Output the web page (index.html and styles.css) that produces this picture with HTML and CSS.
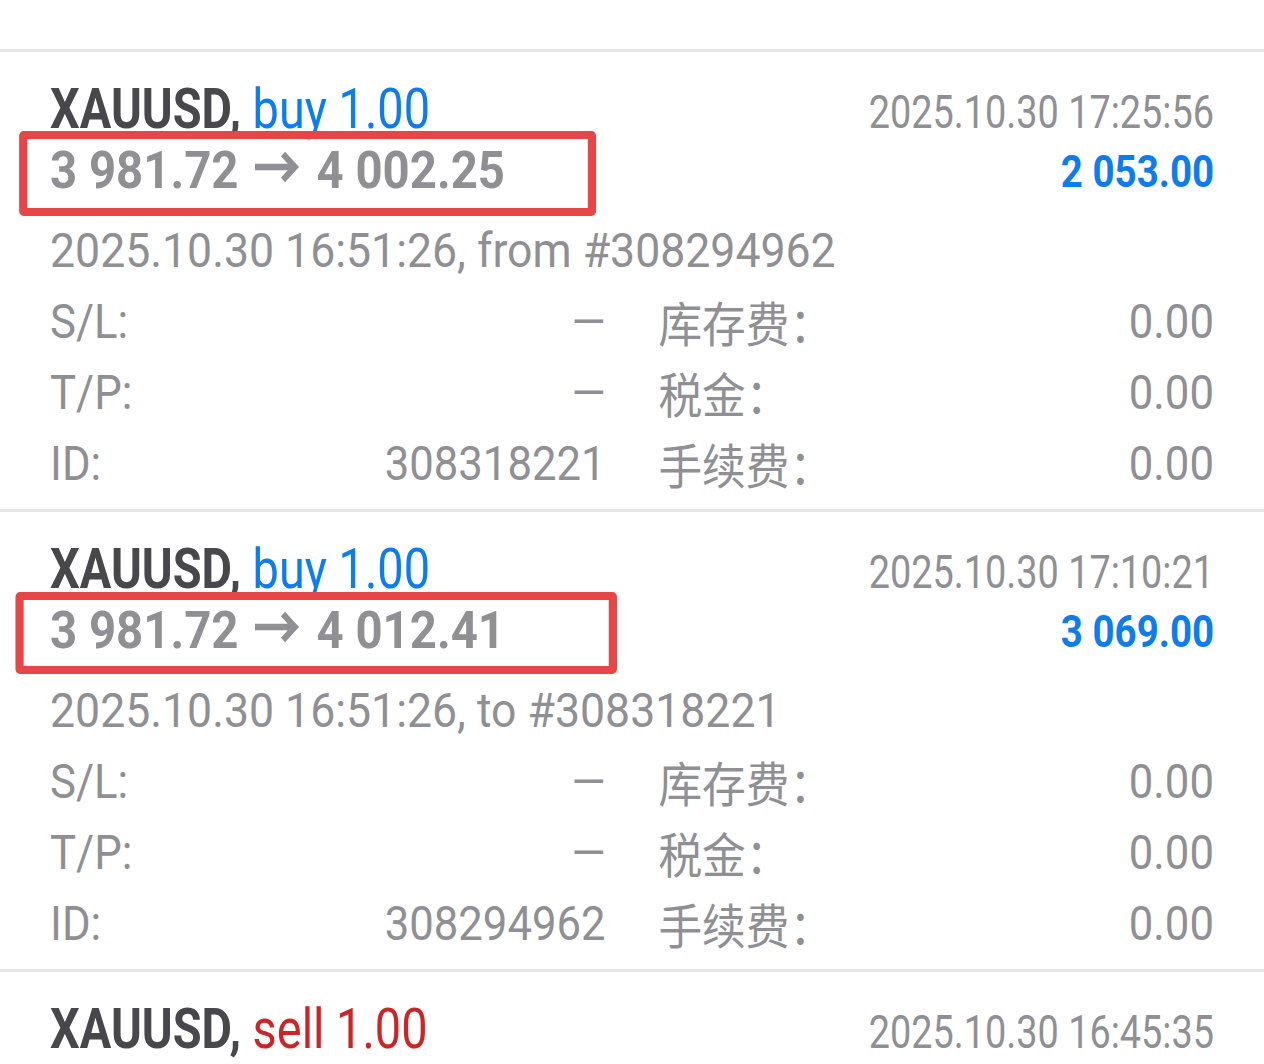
FILE: index.html
```html
<!DOCTYPE html>
<html lang="zh-CN">
<head>
  <meta charset="UTF-8">
  <meta name="viewport" content="width=device-width, initial-scale=1.0">
  <title>历史 - 成交</title>
  <link rel="stylesheet" href="styles.css">
</head>
<body>
  <div class="screen">
    <div class="top-gap"></div>

    <div class="deal">
      <div class="head">
        <div class="head-left">
          <div class="title"><span class="cond"><b class="sym">XAUUSD,</b> <span class="buy">buy 1.00</span></span></div>
          <div class="price"><span class="mark mark-a"></span>3 981.72 <svg class="arrow" viewBox="0 0 50 34"><path d="M0 17H44M31 4L44 17L31 30"/></svg> 4 002.25</div>
        </div>
        <div class="head-right">
          <div class="time"><span class="cond-r">2025.10.30 17:25:56</span></div>
          <div class="profit"><span class="cond-p">2 053.00</span></div>
        </div>
      </div>
      <div class="open">2025.10.30 16:51:26, from #308294962</div>
      <div class="fields">
        <div class="field"><span>S/L:</span><span>—</span></div>
        <div class="field"><span class="cjk">库存费：</span><span>0.00</span></div>
        <div class="field"><span>T/P:</span><span>—</span></div>
        <div class="field"><span class="cjk">税金：</span><span>0.00</span></div>
        <div class="field"><span>ID:</span><span>308318221</span></div>
        <div class="field"><span class="cjk">手续费：</span><span>0.00</span></div>
      </div>
    </div>

    <div class="deal">
      <div class="head">
        <div class="head-left">
          <div class="title"><span class="cond"><b class="sym">XAUUSD,</b> <span class="buy">buy 1.00</span></span></div>
          <div class="price"><span class="mark mark-b"></span>3 981.72 <svg class="arrow" viewBox="0 0 50 34"><path d="M0 17H44M31 4L44 17L31 30"/></svg> 4 012.41</div>
        </div>
        <div class="head-right">
          <div class="time"><span class="cond-r">2025.10.30 17:10:21</span></div>
          <div class="profit"><span class="cond-p">3 069.00</span></div>
        </div>
      </div>
      <div class="open">2025.10.30 16:51:26, to #308318221</div>
      <div class="fields">
        <div class="field"><span>S/L:</span><span>—</span></div>
        <div class="field"><span class="cjk">库存费：</span><span>0.00</span></div>
        <div class="field"><span>T/P:</span><span>—</span></div>
        <div class="field"><span class="cjk">税金：</span><span>0.00</span></div>
        <div class="field"><span>ID:</span><span>308294962</span></div>
        <div class="field"><span class="cjk">手续费：</span><span>0.00</span></div>
      </div>
    </div>

    <div class="deal">
      <div class="head">
        <div class="head-left">
          <div class="title"><span class="cond"><b class="sym">XAUUSD,</b> <span class="sell">sell 1.00</span></span></div>
        </div>
        <div class="head-right">
          <div class="time"><span class="cond-r">2025.10.30 16:45:35</span></div>
        </div>
      </div>
    </div>
  </div>
</body>
</html>
```

FILE: styles.css
```css
html, body {
  margin: 0;
  background: #fff;
  overflow: hidden;
}
body {
  font-family: Roboto, "Noto Sans CJK SC", sans-serif;
  color: #8f8f94;
}
/* the app screenshot is a bit narrower than the font */
.screen {
  width: 1389px;
  transform: scaleX(0.91);
  transform-origin: 0 0;
}
.top-gap {
  height: 49px;
}
.deal {
  box-sizing: border-box;
  height: 460px;
  border-top: 3px solid #e6e6e6;
  padding: 27px 55px 9px;
}
.head {
  display: flex;
  justify-content: space-between;
}
.head-right {
  text-align: right;
}
.title {
  font-size: 56px;
  line-height: 60px;
  white-space: nowrap;
}
.cond {
  display: inline-block;
  transform: scaleX(0.92);
  transform-origin: left;
}
.sym {
  font-weight: 700;
  color: #47474c;
}
.buy {
  color: #0c7cf0;
}
.sell {
  color: #cd2527;
}
.price {
  position: relative;
  font-size: 52px;
  line-height: 64px;
  font-weight: 700;
  white-space: nowrap;
}
.arrow {
  width: 50px;
  height: 34px;
  margin: 0 5px;
  vertical-align: 4px;
  fill: none;
  stroke: #8f8f94;
  stroke-width: 6.5;
}
.mark {
  position: absolute;
  border: 8px solid #e84547;
  border-width: 8px 9px;
  border-radius: 5px;
}
.mark-a {
  left: -34px;
  top: -8px;
  width: 616px;
  height: 69px;
}
.mark-b {
  left: -38px;
  top: -7px;
  width: 643px;
  height: 66px;
}
.time {
  padding-top: 4px;
  font-size: 47px;
  line-height: 58px;
  white-space: nowrap;
}
.cond-r {
  display: inline-block;
  transform: scaleX(0.884);
  transform-origin: right;
}
.profit {
  font-size: 45px;
  line-height: 62px;
  font-weight: 700;
  color: #0c7cf0;
}
.cond-p {
  display: inline-block;
  transform: scaleX(0.94);
  transform-origin: right;
}
.open {
  margin-top: 12px;
  font-size: 49px;
  line-height: 71px;
  white-space: nowrap;
}
.fields {
  display: grid;
  grid-template-columns: 1fr 1fr;
  column-gap: 58px;
  grid-auto-rows: 71px;
  font-size: 48px;
  line-height: 71px;
}
.field {
  display: flex;
  justify-content: space-between;
  white-space: nowrap;
}
.cjk {
  font-family: "Noto Sans CJK SC", sans-serif;
}
```
